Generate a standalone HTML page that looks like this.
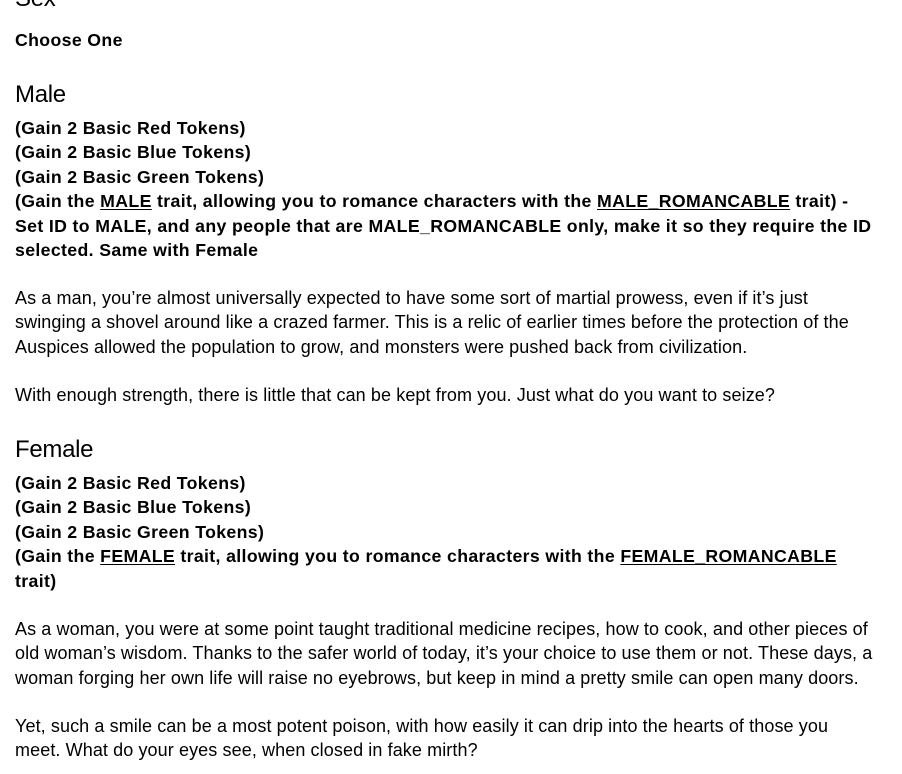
<!DOCTYPE html>
<html><head><meta charset="utf-8"><style>
html,body{margin:0;padding:0;background:#fff;width:902px;height:774px;overflow:hidden;position:relative}
div.b{position:absolute;left:15px;font-family:"Liberation Sans",Arial,sans-serif;color:#000;white-space:nowrap}
.t{font-size:18px;line-height:24.4px;letter-spacing:0.1px}
.bd{font-weight:bold;font-size:17.7px;line-height:24.4px;letter-spacing:0.36px}
.h{font-size:24px;line-height:30px;letter-spacing:-0.3px}
u{text-underline-offset:2px}
</style></head><body>
<div class="b h" style="top:-16px">Sex</div>
<div class="b bd" style="top:28px">Choose One</div>
<div class="b h" style="top:80px">Male</div>
<div class="b bd" style="top:116px">(Gain 2 Basic Red Tokens)<br>(Gain 2 Basic Blue Tokens)<br>(Gain 2 Basic Green Tokens)<br>(Gain the <u>MALE</u> trait, allowing you to romance characters with the <u>MALE_ROMANCABLE</u> trait) -<br>Set ID to MALE, and any people that are MALE_ROMANCABLE only, make it so they require the ID<br>selected. Same with Female</div>
<div class="b t" style="top:286px">As a man, you’re almost universally expected to have some sort of martial prowess, even if it’s just<br>swinging a shovel around like a crazed farmer. This is a relic of earlier times before the protection of the<br>Auspices allowed the population to grow, and monsters were pushed back from civilization.</div>
<div class="b t" style="top:383px">With enough strength, there is little that can be kept from you. Just what do you want to seize?</div>
<div class="b h" style="top:435px">Female</div>
<div class="b bd" style="top:471px">(Gain 2 Basic Red Tokens)<br>(Gain 2 Basic Blue Tokens)<br>(Gain 2 Basic Green Tokens)<br>(Gain the <u>FEMALE</u> trait, allowing you to romance characters with the <u>FEMALE_ROMANCABLE</u><br>trait)</div>
<div class="b t" style="top:617px">As a woman, you were at some point taught traditional medicine recipes, how to cook, and other pieces of<br>old woman’s wisdom. Thanks to the safer world of today, it’s your choice to use them or not. These days, a<br>woman forging her own life will raise no eyebrows, but keep in mind a pretty smile can open many doors.</div>
<div class="b t" style="top:714px">Yet, such a smile can be a most potent poison, with how easily it can drip into the hearts of those you<br>meet. What do your eyes see, when closed in fake mirth?</div>
</body></html>
